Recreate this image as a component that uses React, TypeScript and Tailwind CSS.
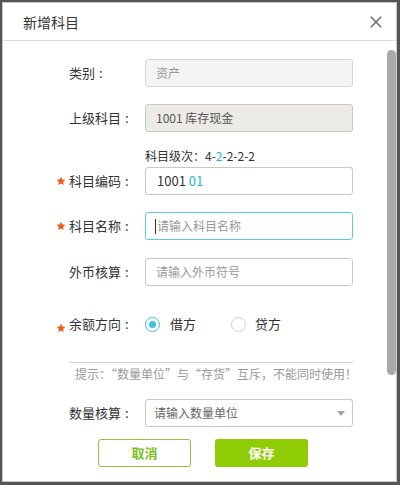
import React from "react";

const font = { fontFamily: '"Noto Sans CJK SC", "Noto Sans", sans-serif' };

function Star({ show, low }: { show?: boolean; low?: boolean }) {
  return (
    <div className={`w-[13px] flex items-center ${low ? "pt-[8px]" : ""}`}>
      {show && (
        <svg width="10" height="10" viewBox="0 0 24 24">
          <path d="M12 1.5l3.2 6.9 7.3.8-5.4 5 1.5 7.3L12 17.8l-6.6 3.7 1.5-7.3-5.4-5 7.3-.8z" fill="#f05a1a" />
        </svg>
      )}
    </div>
  );
}

function Label({ text }: { text: string }) {
  return (
    <div className="w-[76px] text-[13px] text-[#333] leading-[16px]">
      {text}
      <span className="ml-[4px]">:</span>
    </div>
  );
}

export default function App() {
  return (
    <div className="w-[400px] h-[485px] bg-[#555555] pt-[2px] pl-[2px] overflow-hidden" style={font}>
      <div className="w-[395px] h-[480px] bg-white border border-[#c9c9c9] flex flex-col relative">
        <div className="h-[38px] border-b border-[#dddddd] flex items-center justify-between pl-[20px] pr-[14px] shrink-0">
          <span className="text-[14px] text-[#333] leading-[20px]">新增科目</span>
          <svg width="12" height="12" viewBox="0 0 12 12">
            <path d="M0.8 0.8L11.2 11.2M11.2 0.8L0.8 11.2" stroke="#6b6b6b" strokeWidth="1.5" />
          </svg>
        </div>

        <div className="absolute right-[0px] top-[47px] w-[9px] h-[325px] rounded-[5px] bg-[#a9a9a9]" />

        <div className="flex flex-col pl-[53px] pt-[18px]">
          <div className="flex items-center">
            <Star />
            <Label text="类别" />
            <div className="w-[208px] h-[28px] rounded-[3px] border border-[#d6d6d6] bg-[#f4f4f4] flex items-center pl-[10px] text-[12px] text-[#999]">资产</div>
          </div>

          <div className="flex items-center mt-[17px]">
            <Star />
            <Label text="上级科目" />
            <div className="w-[208px] h-[28px] rounded-[3px] border border-[#c8c8c8] bg-[#ecebe6] flex items-center pl-[10px] text-[12px] text-[#555]">1001 库存现金</div>
          </div>

          <div className="mt-[16px] pl-[89px] text-[12px] leading-[16px] text-[#333]">
            科目级次：4-<span className="text-[#29b4dc]">2</span>-2-2-2
          </div>

          <div className="flex items-center mt-[3px]">
            <Star show />
            <Label text="科目编码" />
            <div className="w-[208px] h-[28px] rounded-[3px] border border-[#c8c8c8] bg-white flex items-center pl-[11px] text-[13px] text-[#333]">
              1001&nbsp;<span className="text-[#29b4dc]">01</span>
            </div>
          </div>

          <div className="flex items-center mt-[17px]">
            <Star show />
            <Label text="科目名称" />
            <div className="w-[208px] h-[28px] rounded-[3px] border border-[#5ccbe4] bg-white flex items-center pl-[9px] text-[12px] text-[#999]">
              <span className="w-[1px] h-[15px] bg-[#333] mr-[1px]" />
              请输入科目名称
            </div>
          </div>

          <div className="flex items-center mt-[18px]">
            <Star />
            <Label text="外币核算" />
            <div className="w-[208px] h-[28px] rounded-[3px] border border-[#c8c8c8] bg-white flex items-center pl-[10px] text-[12px] text-[#999]">请输入外币符号</div>
          </div>

          <div className="flex items-center mt-[28px] h-[20px]">
            <Star show low />
            <Label text="余额方向" />
            <div className="flex items-center">
              <span className="w-[15px] h-[15px] rounded-full border border-[#3cc3e0] flex items-center justify-center">
                <span className="w-[7px] h-[7px] rounded-full bg-[#3cc3e0]" />
              </span>
              <span className="ml-[10px] text-[13px] text-[#333]">借方</span>
              <span className="ml-[35px] w-[15px] h-[15px] rounded-full border border-[#cfcfcf]" />
              <span className="ml-[9px] text-[13px] text-[#333]">贷方</span>
            </div>
          </div>

          <div className="mt-[28px] ml-[13px] w-[284px] h-[1px] bg-[#cfcfcf]" />

          <div className="mt-[3px] pl-[19px] text-[12px] leading-[16px] text-[#999]">
            提示：“数量单位”与“存货”互斥，不能同时使用！
          </div>

          <div className="flex items-center mt-[17px]">
            <Star />
            <Label text="数量核算" />
            <div className="w-[208px] h-[28px] rounded-[3px] border border-[#c8c8c8] bg-white flex items-center justify-between pl-[8px] pr-[7px] text-[12px] text-[#666]">
              <span>请输入数量单位</span>
              <svg width="8" height="5" viewBox="0 0 8 5">
                <path d="M0 0H8L4 5Z" fill="#a0a0a0" />
              </svg>
            </div>
          </div>

          <div className="flex mt-[12px] ml-[42px] gap-[24px]">
            <div className="w-[93px] h-[28px] rounded-[3px] border border-[#8cc63f] bg-white flex items-center justify-center text-[13px] font-bold text-[#7cc01f]">取消</div>
            <div className="w-[93px] h-[28px] rounded-[3px] bg-[#8fcc05] flex items-center justify-center text-[13px] font-bold text-white">保存</div>
          </div>
        </div>
      </div>
    </div>
  );
}
